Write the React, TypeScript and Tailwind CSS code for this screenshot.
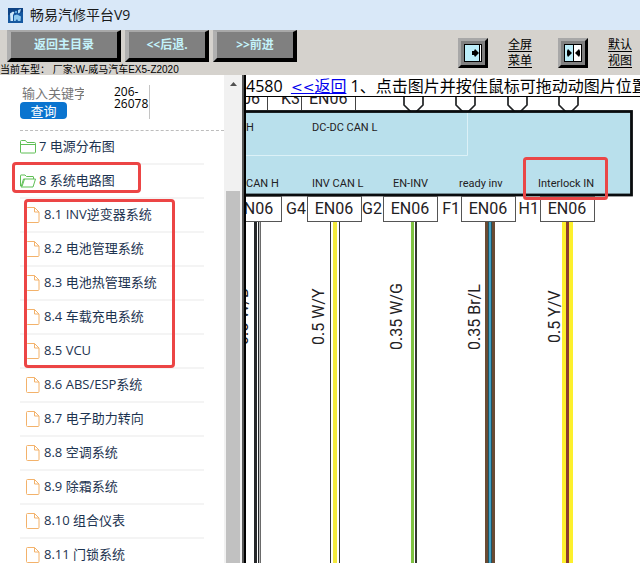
import React from 'react'

const documents = [
  { title: '8.6 ABS/ESP系统' },
  { title: '8.7 电子助力转向' },
  { title: '8.8 空调系统' },
  { title: '8.9 除霜系统' },
  { title: '8.10 组合仪表' },
  { title: '8.11 门锁系统' },
]

const markedDocuments = [
  { title: '8.1 INV逆变器系统' },
  { title: '8.2 电池管理系统' },
  { title: '8.3 电池热管理系统' },
  { title: '8.4 车载充电系统' },
  { title: '8.5 VCU' },
]

const connectors = [
  { x: 227, pin: '' },
  { x: 307, pin: 'G4' },
  { x: 383, pin: 'G2' },
  { x: 461, pin: 'F1' },
  { x: 540, pin: 'H1' },
]

const signals = [
  { x: 246, y: 131, text: 'H' },
  { x: 312, y: 131, text: 'DC-DC CAN L' },
  { x: 246, y: 187, text: 'CAN H' },
  { x: 312, y: 187, text: 'INV CAN L' },
  { x: 393, y: 187, text: 'EN-INV' },
  { x: 459, y: 187, text: 'ready inv' },
  { x: 538, y: 187, text: 'Interlock IN' },
]

const wireLabels = [
  { x: 248, y: 345, text: '0.5 W/B' },
  { x: 324, y: 345, text: '0.5 W/Y' },
  { x: 402, y: 350, text: '0.35 W/G' },
  { x: 480, y: 350, text: '0.35 Br/L' },
  { x: 560, y: 343, text: '0.5 Y/V' },
]

// Each wire is a stack of parallel strands
const strands = [
  { x: 254, w: 3, color: '#26282a' },
  { x: 258, w: 1, color: '#26282a' },
  { x: 259, w: 1, color: '#b9b9b9' },
  { x: 260, w: 1, color: '#6a6a6a' },
  { x: 330, w: 1, color: '#333333' },
  { x: 333, w: 4, color: '#f3e93c' },
  { x: 339, w: 1, color: '#333333' },
  { x: 411, w: 3, color: '#7fc241' },
  { x: 415, w: 2, color: '#33372f' },
  { x: 485, w: 10, color: '#6a4a33' },
  { x: 488, w: 4, color: '#1f5566' },
  { x: 489, w: 2, color: '#44a0c4' },
  { x: 562, w: 11, color: '#fdf02c' },
  { x: 566, w: 3, color: '#8c3b2c' },
]

const AppLogo = () => (
  <svg className="size-[15px]" viewBox="0 0 15 15" aria-hidden="true">
    <rect width="15" height="15" fill="#1558a0" />
    <path d="M0 0h15v4L0 7z" fill="#0d4284" />
    <path d="M2 5.5l3-2 1.5 1L5 7v6H2.5z" fill="#cfe9fa" />
    <path d="M6 7.500l3-1 4 2-.5 4.500H10l-1-2-1.500 2H6z" fill="#8cc8ee" />
    <path d="M10 2l3-1-1 3.500-2 1z" fill="#b7dcf5" />
    <circle cx="8" cy="4" r="1.2" fill="#5aa7df" />
  </svg>
)

const FolderIcon = () => (
  <svg className="h-[14px] w-4 shrink-0" viewBox="0 0 16 14" fill="none" stroke="#5fbf55" aria-hidden="true">
    <path d="M.5 12V1.5q0-1 1-1h4l1.5 2h7.5q1 0 1 1V12q0 1-1 1h-13q-1 0-1-1zM.5 4.5h15" />
  </svg>
)

const FolderOpenIcon = () => (
  <svg className="h-[14px] w-4 shrink-0" viewBox="0 0 16 14" fill="none" stroke="#5fbf55" strokeLinejoin="round" aria-hidden="true">
    <path d="M.5 12V1.5q0-.5.5-.5h4l1.5 1.5H13q.5 0 .5.5v2M1 13L3.5 5h12L13 13zM4.5 5L2 12.5" />
  </svg>
)

const FileIcon = () => (
  <svg className="h-4 w-[14px] shrink-0" viewBox="0 0 14 16" fill="none" stroke="#f3b26b" strokeLinejoin="round" aria-hidden="true">
    <path d="M1.5.5h7l4.5 4.5v9.5q0 1-1 1H1.5q-1 0-1-1v-13q0-1 1-1zM8.5.5V5H13" />
  </svg>
)

const BackButton = ({ children, className }: { children: React.ReactNode; className: string }) => (
  <button
    type="button"
    className={`h-8 border-4 border-t-2 border-t-[#a8a8a8] border-r-black border-b-black border-l-[#b0b0b0] bg-[#808080] text-xs font-bold text-[#c4f3fb] ${className}`}
  >
    {children}
  </button>
)

const ViewButton = ({ label, children }: { label: string; children: React.ReactNode }) => (
  <button
    type="button"
    aria-label={label}
    className="flex size-[30px] items-center justify-center border-[3px] border-t-[#a8a8a8] border-r-black border-b-black border-l-[#a8a8a8] bg-[#808080]"
  >
    <svg className="size-[18px] shrink-0" viewBox="0 0 18 18" aria-hidden="true">
      {children}
    </svg>
  </button>
)

const DocumentRow = ({ title }: { title: string }) => (
  <li className="h-[34px] border-b-2 border-[#f4f4f4]">
    <a href="#" className="flex h-8 items-center gap-1 pl-[6px]">
      <FileIcon />
      {title}
    </a>
  </li>
)

const Sidebar = () => (
  <aside className="flex w-[244px] shrink-0 border-r-2 border-[#565656] bg-white">
    <div className="min-w-0 flex-1 overflow-hidden pt-[10px] pl-5">
      <form className="flex border-b border-dashed border-[#bdbdbd] pb-[11px]">
        <div className="w-16">
          <input
            type="text"
            aria-label="关键字"
            placeholder="输入关键字"
            className="block h-[17px] w-full pl-[2px] text-[13px] outline-none placeholder:text-[#757575]"
          />
          <button type="button" className="block h-[17px] w-[47px] rounded bg-[#0a74cf] text-[13px] leading-4 text-white">
            查询
          </button>
        </div>
        <div className="ml-[30px] w-9 border-r border-[#c4c4c4] pt-[1px] text-xs leading-3 text-black">206-26078</div>
      </form>

      <ul className="mr-5 text-[13px] text-[#1c3350]">
        <li className="h-[34px] border-b-2 border-[#f4f4f4]">
          <a href="#" className="flex h-8 items-center gap-[3px]">
            <FolderIcon />7 电源分布图
          </a>
        </li>
        <li>
          <div className="relative h-[34px] border-b-2 border-[#f4f4f4]">
            <a href="#" className="flex h-8 items-center gap-[3px]">
              <FolderOpenIcon />8 系统电路图
            </a>
            <span className="absolute -top-[3px] -left-2 h-[31px] w-[129px] rounded-sm border-[3px] border-[#ec4545]" />
          </div>
          <div className="relative">
            <ul>
              {markedDocuments.map((item) => (
                <DocumentRow key={item.title} title={item.title} />
              ))}
            </ul>
            <span className="absolute top-0 left-1 h-[169px] w-[151px] rounded-sm border-[3px] border-[#ec4545]" />
          </div>
          <ul>
            {documents.map((item) => (
              <DocumentRow key={item.title} title={item.title} />
            ))}
          </ul>
        </li>
      </ul>
    </div>

    {/* Scrollbar */}
    <div className="flex w-[18px] flex-col items-center bg-[#f1f1f1]">
      <svg className="h-5 w-[17px] shrink-0" viewBox="0 0 17 20" aria-hidden="true">
        <path d="M5 11l3.5-4 3.5 4z" fill="#505050" />
      </svg>
      <div className="mt-24 w-[14px] flex-1 bg-[#c1c1c1]" />
    </div>
  </aside>
)

const WiringDiagram = () => (
  <svg
    className="block min-h-0 w-full flex-1"
    viewBox="246 97 394 466"
    preserveAspectRatio="xMinYMin slice"
    fontFamily="Roboto, sans-serif"
    fill="#1f2123"
  >
    {/* Upper connectors */}
    <g fontSize="16">
      <text x="242" y="104">06</text>
      <text x="281" y="104">K3</text>
      <text x="309" y="104">EN06</text>
    </g>
    <path d="M267.5 97v13M301.5 97v13M355.5 97v13" stroke="#444" />
    {[403, 455, 507, 558].map((x) => (
      <path key={x} d={`M${x + 1} 97v8l7 7h5l7-7v-8`} fill="none" stroke="#1f2123" strokeWidth="1.7" />
    ))}

    {/* Control unit */}
    <rect x="230" y="111.5" width="401.5" height="83.5" fill="#b9e0ec" stroke="#090c0e" strokeWidth="2.8" />
    <path d="M246 155.5h221.5V113" fill="none" stroke="#dcf1f7" />
    <g fontSize="11">
      {signals.map((s) => (
        <text key={s.text} x={s.x} y={s.y}>{s.text}</text>
      ))}
    </g>

    {/* Lower connectors */}
    <g fontSize="16">
      {connectors.map((c) => (
        <g key={c.x}>
          <rect x={c.x + 0.5} y="196.5" width="54" height="25" fill="#fff" stroke="#555" />
          <text x={c.x + 27} y="214" textAnchor="middle">EN06</text>
          <text x={c.x - 1} y="214" textAnchor="end">{c.pin}</text>
        </g>
      ))}
    </g>

    {/* Wires */}
    {strands.map((s) => (
      <rect key={s.x} x={s.x} y="222" width={s.w} height="1200" fill={s.color} />
    ))}
    <g fontSize="16">
      {wireLabels.map((l) => (
        <text key={l.text} transform={`translate(${l.x} ${l.y}) rotate(-90)`}>{l.text}</text>
      ))}
    </g>

    <rect x="524.5" y="158.5" width="82" height="40" rx="2" fill="none" stroke="#ea4747" strokeWidth="3" />
  </svg>
)

const App = () => {
  return (
    <div className="flex h-screen flex-col overflow-hidden bg-white font-['Open_Sans','Noto_Sans_CJK_SC',sans-serif]">
      {/* Title bar */}
      <header className="flex h-[30px] shrink-0 items-center gap-[7px] bg-[#d9e8f8] pl-2">
        <AppLogo />
        <h1 className="text-sm leading-5 text-[#1a1a1a]">畅易汽修平台V9</h1>
      </header>

      {/* Toolbar */}
      <nav className="flex h-[45px] shrink-0 justify-between overflow-hidden bg-[#d5d2cd]">
        <div>
          <div className="flex gap-1 pl-[7px]">
            <BackButton className="w-[114px]">返回主目录</BackButton>
            <BackButton className="w-[84px]">&lt;&lt;后退.</BackButton>
            <BackButton className="w-[84px]">&gt;&gt;前进</BackButton>
          </div>
          <p className="font-['Liberation_Sans','Noto_Sans_CJK_SC',sans-serif] text-[10px] leading-4 whitespace-pre text-black">
            当前车型： 厂家:W-威马汽车EX5-Z2020
          </p>
        </div>
        <div className="flex items-center gap-[26px] pr-2 text-xs leading-4 text-black">
          <div className="flex items-center gap-5">
            <ViewButton label="全屏菜单">
              <rect x=".5" y=".5" width="17" height="17" fill="#bdeefa" stroke="#000" />
              <path d="M15 1h2v16h-2z" fill="#fff" />
              <path d="M15.5 1v16" stroke="#000" />
              <path d="M8 7h2l1-2 4 4-4 4-1-2H8z" />
            </ViewButton>
            <a href="#" className="w-6 underline underline-offset-2">全屏菜单</a>
          </div>
          <div className="flex items-center gap-5">
            <ViewButton label="默认视图">
              <rect x=".5" y=".5" width="17" height="17" fill="#bdeefa" stroke="#000" />
              <path d="M9 1h8v16H9z" fill="#fff" />
              <path d="M9.5 1v16" stroke="#000" />
              <path d="M3 7l1-2 4 4-4 4-1-2zM16 7l-1-2-4 4 4 4 1-2z" />
            </ViewButton>
            <a href="#" className="w-6 underline underline-offset-2">默认视图</a>
          </div>
        </div>
      </nav>

      <main className="flex min-h-0 flex-1">
        <Sidebar />
        <section className="flex min-w-0 flex-1 flex-col border-l-2 border-black bg-white">
          <p className="h-[22px] shrink-0 overflow-hidden border-b border-black text-base leading-[22px] whitespace-nowrap text-black">
            4580&nbsp;&nbsp;
            <a href="#" className="text-[#0000ee] underline">
              <span className="font-['DejaVu_Sans',sans-serif] text-sm">&lt;&lt;</span>返回
            </a>{' '}
            1、点击图片并按住鼠标可拖动动图片位置
          </p>
          <WiringDiagram />
        </section>
      </main>
    </div>
  )
}

export default App
